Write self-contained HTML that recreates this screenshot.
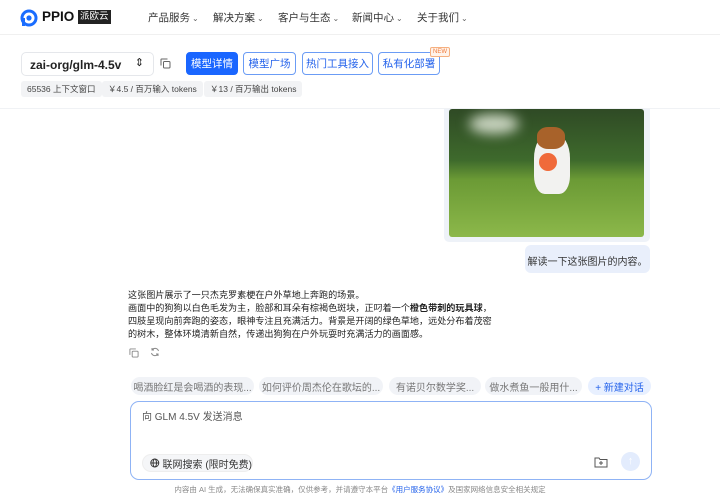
<!DOCTYPE html>
<html><head><meta charset="utf-8"><style>
*{box-sizing:border-box;margin:0;padding:0}
body{width:720px;height:496px;overflow:hidden;background:#fff;font-family:"Liberation Sans","Noto Sans CJK SC",sans-serif;color:#222;position:relative}
.abs{position:absolute;white-space:nowrap}
.nav span{position:absolute;top:10px;font-size:10.5px;color:#333;white-space:nowrap}
.nav i{font-style:normal;font-size:8px;color:#666;margin-left:2px}
.btn{position:absolute;top:52px;height:23px;border:1px solid #6b9cf5;border-radius:4px;font-size:10.5px;color:#2563eb;display:flex;align-items:center;justify-content:center;background:#fff;white-space:nowrap}
.tag{position:absolute;top:81px;height:16px;background:#f2f3f5;border-radius:3px;font-size:8.5px;color:#444;display:flex;align-items:center;padding:0 6px;white-space:nowrap}
.sug{position:absolute;top:377px;height:18px;background:#f1f3f7;border-radius:9px;font-size:10px;color:#777;display:flex;align-items:center;justify-content:center;white-space:nowrap}
</style></head><body>
<div class="abs" style="left:0;top:0;width:720px;height:35px;border-bottom:1px solid #f0f0f0"></div>
<svg class="abs" style="left:20px;top:9px" width="18" height="18" viewBox="0 0 18 18"><circle cx="9" cy="9" r="7" fill="none" stroke="#1a6dff" stroke-width="3"/><circle cx="9" cy="9" r="2.6" fill="#1a6dff"/><rect x="2" y="9" width="3" height="8" fill="#1a6dff"/></svg>
<div class="abs" style="left:42px;top:9px;font-size:13.5px;font-weight:bold;color:#111">PPIO</div>
<div class="abs" style="left:78px;top:10px;background:#222;color:#fff;font-size:9.5px;padding:1px 2px;line-height:12px">派欧云</div>
<div class="nav"><span style="left:148px">产品服务<i>⌄</i></span><span style="left:213px">解决方案<i>⌄</i></span><span style="left:278px">客户与生态<i>⌄</i></span><span style="left:352px">新闻中心<i>⌄</i></span><span style="left:417px">关于我们<i>⌄</i></span></div>
<div class="abs" style="left:21px;top:52px;width:133px;height:24px;border:1px solid #e5e7eb;border-radius:5px;font-size:12px;font-weight:bold;padding:5px 8px">zai-org/glm-4.5v<span style="position:absolute;right:9px;top:3px;font-weight:normal;font-size:11px">⇕</span></div>
<svg class="abs" style="left:160px;top:58px" width="11" height="11" viewBox="0 0 11 11" fill="none" stroke="#666"><rect x="3.5" y="3.5" width="6.5" height="6.5" rx="1"/><path d="M1 7.5V1.5a.5.5 0 0 1 .5-.5h6"/></svg>
<div class="btn" style="left:186px;width:52px;background:#1a66ff;color:#fff;border-color:#1a66ff">模型详情</div>
<div class="btn" style="left:243px;width:53px">模型广场</div>
<div class="btn" style="left:302px;width:71px">热门工具接入</div>
<div class="btn" style="left:378px;width:62px">私有化部署</div>
<div class="abs" style="left:430px;top:47px;font-size:6px;color:#f07a3a;background:#fff3ea;border:1px solid #f5b080;padding:0 2px;border-radius:2px;line-height:8px">NEW</div>
<div class="tag" style="left:21px">65536 上下文窗口</div>
<div class="tag" style="left:102px">￥4.5 / 百万输入 tokens</div>
<div class="tag" style="left:204px">￥13 / 百万输出 tokens</div>
<div class="abs" style="left:0;top:108px;width:720px;height:1px;background:#f0f2f5"></div>
<div class="abs" style="left:444px;top:109px;width:206px;height:133px;background:#eef2f8;border-radius:0 0 5px 5px"></div>
<div class="abs" style="left:449px;top:109px;width:195px;height:128px;border-radius:3px;overflow:hidden;background:linear-gradient(#2f4a25 0%,#3e6a2c 40%,#6b9a35 55%,#8cb84a 100%)">
<div class="abs" style="left:20px;top:5px;width:50px;height:20px;background:#c9d4c0;border-radius:50%;filter:blur(6px)"></div>
<div class="abs" style="left:85px;top:25px;width:36px;height:60px;background:#f2f2f0;border-radius:40% 40% 30% 30%"></div>
<div class="abs" style="left:88px;top:18px;width:28px;height:22px;background:#a8622a;border-radius:40%"></div>
<div class="abs" style="left:90px;top:44px;width:18px;height:18px;background:#f06a3a;border-radius:50%"></div>
</div>
<div class="abs" style="left:525px;top:245px;width:125px;height:28px;background:#e9effb;border-radius:6px;font-size:10px;color:#333;padding:8px 0;text-align:center">解读一下这张图片的内容。</div>
<div class="abs" style="left:128px;top:289px;font-size:9.1px;line-height:13px;color:#222">这张图片展示了一只杰克罗素梗在户外草地上奔跑的场景。<br>画面中的狗狗以白色毛发为主，脸部和耳朵有棕褐色斑块，正叼着一个<b>橙色带刺的玩具球</b>，<br>四肢呈现向前奔跑的姿态，眼神专注且充满活力。背景是开阔的绿色草地，远处分布着茂密<br>的树木，整体环境清新自然，传递出狗狗在户外玩耍时充满活力的画面感。</div>
<svg class="abs" style="left:129px;top:348px" width="10" height="10" viewBox="0 0 11 11" fill="none" stroke="#888"><rect x="3.5" y="3.5" width="6.5" height="6.5" rx="1"/><path d="M1 7.5V1.5a.5.5 0 0 1 .5-.5h6"/></svg>
<svg class="abs" style="left:150px;top:347px" width="10" height="10" viewBox="0 0 10 10" fill="none" stroke="#888"><path d="M8.5 4A3.6 3.6 0 0 0 2 3M1.5 6A3.6 3.6 0 0 0 8 7M2 1v2h2M8 9V7H6"/></svg>
<div class="sug" style="left:131px;width:123px">喝酒脸红是会喝酒的表现...</div>
<div class="sug" style="left:259px;width:124px">如何评价周杰伦在歌坛的...</div>
<div class="sug" style="left:389px;width:92px">有诺贝尔数学奖...</div>
<div class="sug" style="left:485px;width:97px">做水煮鱼一般用什...</div>
<div class="sug" style="left:588px;width:63px;background:#e8f0ff;color:#2563eb">+ 新建对话</div>
<div class="abs" style="left:130px;top:401px;width:522px;height:79px;border:1px solid #8fb3f5;border-radius:9px"></div>
<div class="abs" style="left:142px;top:408px;font-size:10px;color:#555">向 GLM 4.5V 发送消息</div>
<div class="abs" style="left:142px;top:454px;width:111px;height:18px;background:#f5f6f8;border:1px solid #eee;border-radius:9px;font-size:10px;color:#333;display:flex;align-items:center;padding-left:7px">
<svg width="10" height="10" viewBox="0 0 10 10" fill="none" stroke="#333" style="margin-right:3px"><circle cx="5" cy="5" r="4.2"/><ellipse cx="5" cy="5" rx="1.8" ry="4.2"/><path d="M.8 5h8.4"/></svg>联网搜索 (限时免费)</div>
<svg class="abs" style="left:594px;top:456px" width="14" height="12" viewBox="0 0 14 12" fill="none" stroke="#555"><path d="M1 2h4l1 1.5h7V11H1z"/><path d="M7 5v4M5 7h4"/></svg>
<div class="abs" style="left:621px;top:452px;width:19px;height:19px;border-radius:50%;background:#e3ecfd;color:#fff;font-size:11px;text-align:center;line-height:19px">↑</div>
<div class="abs" style="left:0;top:484px;width:720px;text-align:center;font-size:7.5px;color:#888">内容由 AI 生成，无法确保真实准确，仅供参考，并请遵守本平台<span style="color:#2563eb">《用户服务协议》</span>及国家网络信息安全相关规定</div>
</body></html>
